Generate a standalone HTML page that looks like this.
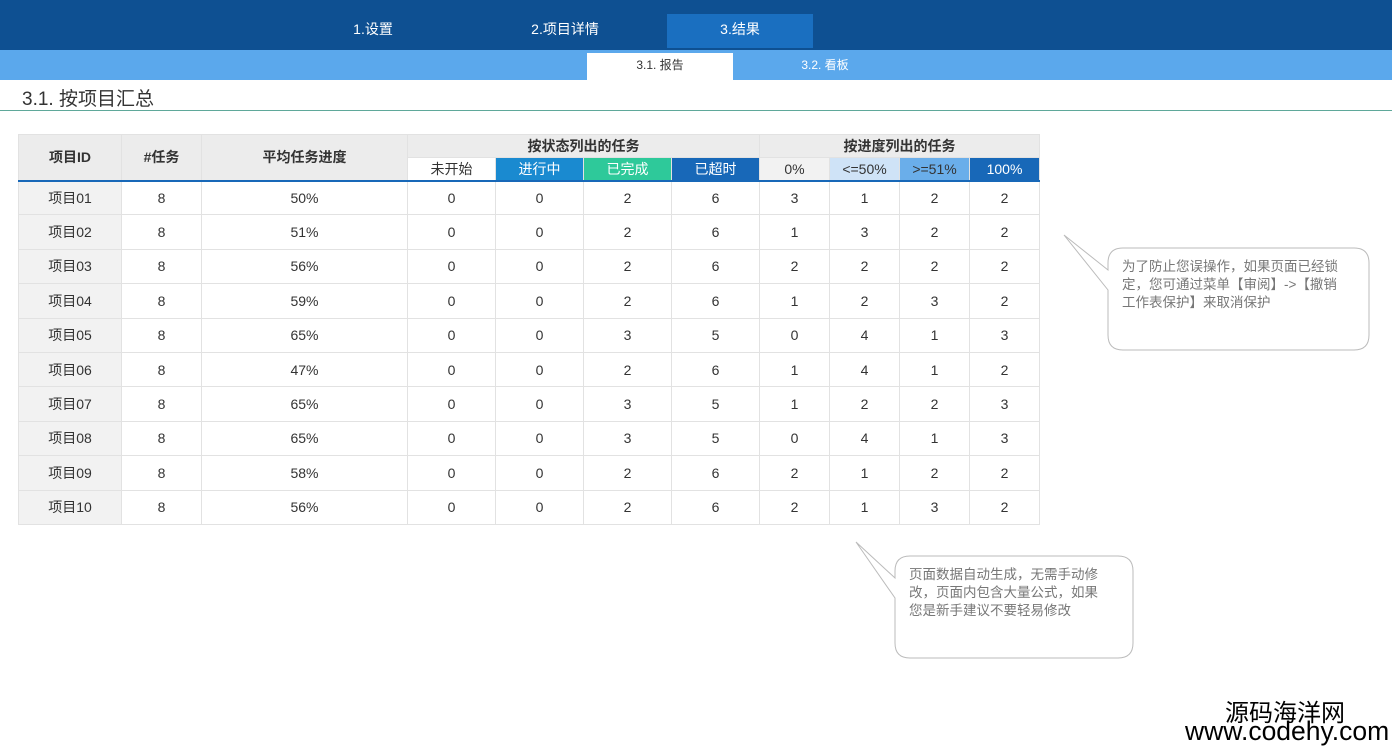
<!DOCTYPE html>
<html><head><meta charset="utf-8"><style>
*{margin:0;padding:0;box-sizing:border-box}
body{width:1392px;height:750px;background:#fff;position:relative;overflow:hidden;font-family:"Liberation Sans","Noto Sans CJK SC",sans-serif;color:#333}
.top{position:absolute;left:0;top:0;width:1392px;height:50px;background:#0e5092}
.top span{position:absolute;top:14px;height:34px;line-height:30px;color:#fff;font-size:14px;text-align:center;width:146px}
.sub{position:absolute;left:0;top:50px;width:1392px;height:30px;background:#5ba8ec}
.sub span{position:absolute;top:3px;height:27px;line-height:24px;font-size:12px;text-align:center;width:146px;color:#fff}
.title{position:absolute;left:22px;top:84px;font-size:19px;color:#333}
.line{position:absolute;left:0;top:110px;width:1392px;height:1px;background:#5fa89a}
table{position:absolute;left:18px;top:134px;border-collapse:collapse;font-size:14px}
td{border:1px solid #e2e2e2;text-align:center;height:34.4px;color:#333}
th{font-weight:bold;font-size:14px;background:#ececec;border:1px solid #e2e2e2;color:#333}
.h1 th{height:23px}
.h2 td{height:23px;border-bottom:2px solid #1868b8;font-size:14px}
td.f{background:#f2f2f2}
</style></head><body>
<div class="top">
<span style="left:300px">1.设置</span>
<span style="left:492px">2.项目详情</span>
<span style="left:667px;background:#1a6fc0">3.结果</span>
</div>
<div class="sub">
<span style="left:587px;background:#fff;color:#333">3.1. 报告</span>
<span style="left:752px">3.2. 看板</span>
</div>
<div class="title">3.1. 按项目汇总</div>
<div class="line"></div>
<table>
<colgroup><col style="width:103px"><col style="width:80px"><col style="width:206px"><col style="width:88px"><col style="width:88px"><col style="width:88px"><col style="width:88px"><col style="width:70px"><col style="width:70px"><col style="width:70px"><col style="width:70px"></colgroup>
<tr class="h1"><th rowspan="2" style="border-bottom:2px solid #1868b8">项目ID</th><th rowspan="2" style="border-bottom:2px solid #1868b8">#任务</th><th rowspan="2" style="border-bottom:2px solid #1868b8">平均任务进度</th><th colspan="4">按状态列出的任务</th><th colspan="4">按进度列出的任务</th></tr>
<tr class="h2"><td style="background:#fff">未开始</td><td style="background:#1a8ad0;color:#fff">进行中</td><td style="background:#2ec99a;color:#fff">已完成</td><td style="background:#1868b8;color:#fff">已超时</td><td style="background:#f2f2f2">0%</td><td style="background:#cfe3f7">&lt;=50%</td><td style="background:#6aaeea">&gt;=51%</td><td style="background:#1868b8;color:#fff">100%</td></tr>
<tr><td class="f">项目01</td><td>8</td><td>50%</td><td>0</td><td>0</td><td>2</td><td>6</td><td>3</td><td>1</td><td>2</td><td>2</td></tr>
<tr><td class="f">项目02</td><td>8</td><td>51%</td><td>0</td><td>0</td><td>2</td><td>6</td><td>1</td><td>3</td><td>2</td><td>2</td></tr>
<tr><td class="f">项目03</td><td>8</td><td>56%</td><td>0</td><td>0</td><td>2</td><td>6</td><td>2</td><td>2</td><td>2</td><td>2</td></tr>
<tr><td class="f">项目04</td><td>8</td><td>59%</td><td>0</td><td>0</td><td>2</td><td>6</td><td>1</td><td>2</td><td>3</td><td>2</td></tr>
<tr><td class="f">项目05</td><td>8</td><td>65%</td><td>0</td><td>0</td><td>3</td><td>5</td><td>0</td><td>4</td><td>1</td><td>3</td></tr>
<tr><td class="f">项目06</td><td>8</td><td>47%</td><td>0</td><td>0</td><td>2</td><td>6</td><td>1</td><td>4</td><td>1</td><td>2</td></tr>
<tr><td class="f">项目07</td><td>8</td><td>65%</td><td>0</td><td>0</td><td>3</td><td>5</td><td>1</td><td>2</td><td>2</td><td>3</td></tr>
<tr><td class="f">项目08</td><td>8</td><td>65%</td><td>0</td><td>0</td><td>3</td><td>5</td><td>0</td><td>4</td><td>1</td><td>3</td></tr>
<tr><td class="f">项目09</td><td>8</td><td>58%</td><td>0</td><td>0</td><td>2</td><td>6</td><td>2</td><td>1</td><td>2</td><td>2</td></tr>
<tr><td class="f">项目10</td><td>8</td><td>56%</td><td>0</td><td>0</td><td>2</td><td>6</td><td>2</td><td>1</td><td>3</td><td>2</td></tr>
</table>
<svg style="position:absolute;left:0;top:0" width="1392" height="750">
<path d="M1123 248 H1354 Q1369 248 1369 263 V335 Q1369 350 1354 350 H1123 Q1108 350 1108 335 V290 L1064 235 L1108 270 V263 Q1108 248 1123 248 Z" fill="#fff" stroke="#bbb" stroke-width="1"/>
<path d="M910 556 H1118 Q1133 556 1133 571 V643 Q1133 658 1118 658 H910 Q895 658 895 643 V598 L856 542 L895 578 V571 Q895 556 910 556 Z" fill="#fff" stroke="#bbb" stroke-width="1"/>
</svg>
<div style="position:absolute;left:1122px;top:258px;width:226px;font-size:13.5px;line-height:18px;color:#777">为了防止您误操作，如果页面已经锁定，您可通过菜单【审阅】->【撤销工作表保护】来取消保护</div>
<div style="position:absolute;left:909px;top:566px;width:200px;font-size:13.5px;line-height:18px;color:#777">页面数据自动生成，无需手动修改，页面内包含大量公式，如果您是新手建议不要轻易修改</div>
<div style="position:absolute;left:1225px;top:693px;font-size:24px;color:#000">源码海洋网</div>
<div style="position:absolute;left:1185px;top:716px;font-size:26.5px;color:#000">www.codehy.com</div>
</body></html>
